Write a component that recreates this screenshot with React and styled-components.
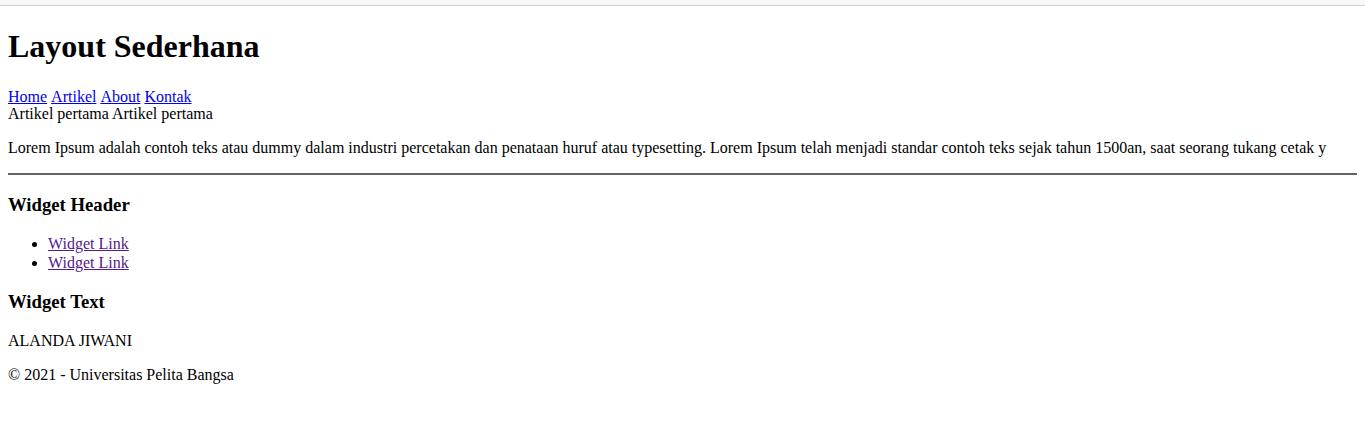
import React from "react";
import styled, { createGlobalStyle } from "styled-components";

const Global = createGlobalStyle`
  html, body { margin: 0; padding: 0; background: #fff; }
  body { font-family: "Liberation Serif", "Times New Roman", serif; font-size: 16px; color: #000; }
`;

const TopBar = styled.div`
  height: 5px;
  background: #f8f8fa;
  border-bottom: 1px solid #cfcfcf;
`;

const Page = styled.div`
  padding: 0.1px 8px 8px;
`;

const Title = styled.h1`
  font-size: 32px;
  font-weight: bold;
  margin: 21.44px 0 22.44px;
`;

const Nav = styled.nav`
  display: flex;
  gap: 4px;
  line-height: 19px;
`;

const NavLink = styled.a`
  color: #0000ee;
  text-decoration: underline;
`;

const Intro = styled.div`
  margin-top: -1px;
`;

const Para = styled.p`
  margin: 16px 0;
  white-space: nowrap;
`;

const Rule = styled.hr`
  border: none;
  border-top: 2px solid #646464;
  margin: 8px 0;
`;

const WidgetTitle = styled.h3`
  font-size: 18.72px;
  font-weight: bold;
  margin: 18.72px 0;
`;

const List = styled.ul`
  margin: 16px 0;
  padding-left: 40px;
  list-style: disc;
`;

const Item = styled.li`
  line-height: 19px;
`;

const WidgetLink = styled.a`
  color: #551a8b;
  text-decoration: underline;
`;

export default function App() {
  return (
    <>
      <Global />
      <TopBar />
      <Page>
        <header>
          <Title>Layout Sederhana</Title>
        </header>
        <Nav>
          <NavLink href="#">Home</NavLink>
          <NavLink href="#">Artikel</NavLink>
          <NavLink href="#">About</NavLink>
          <NavLink href="#">Kontak</NavLink>
        </Nav>
        <Intro>Artikel pertama Artikel pertama</Intro>
        <Para>
          Lorem Ipsum adalah contoh teks atau dummy dalam industri percetakan dan penataan huruf atau typesetting. Lorem Ipsum telah menjadi standar contoh teks sejak tahun 1500an, saat seorang tukang cetak y
        </Para>
        <Rule />
        <aside>
          <WidgetTitle>Widget Header</WidgetTitle>
          <List>
            <Item><WidgetLink href="#">Widget Link</WidgetLink></Item>
            <Item><WidgetLink href="#">Widget Link</WidgetLink></Item>
          </List>
          <WidgetTitle>Widget Text</WidgetTitle>
          <Para>ALANDA JIWANI</Para>
        </aside>
        <footer>
          <Para>© 2021 - Universitas Pelita Bangsa</Para>
        </footer>
      </Page>
    </>
  );
}
